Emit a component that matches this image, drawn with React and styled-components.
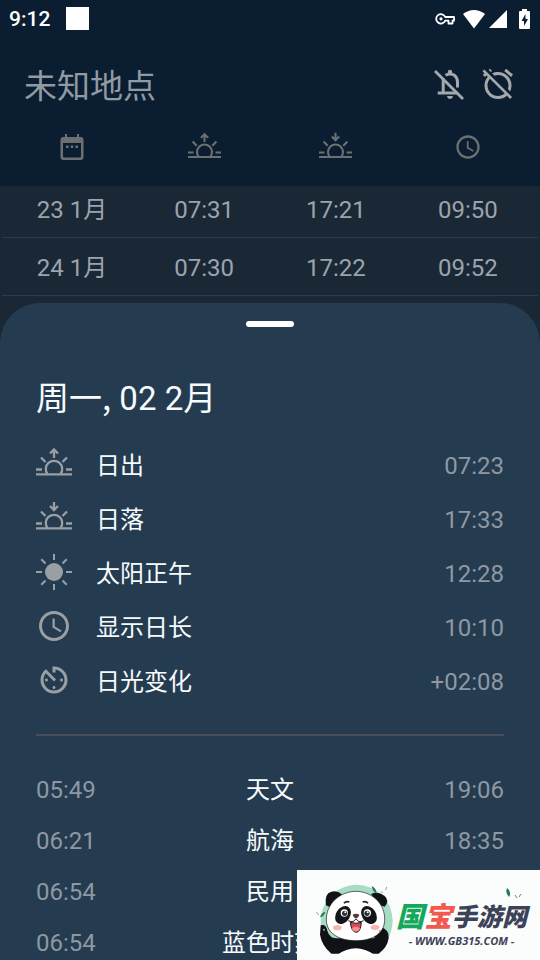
import React from "react";
import styled, { createGlobalStyle } from "styled-components";
import { MdAlarmOff, MdAvTimer, MdSchedule } from "react-icons/md";

const GlobalStyle = createGlobalStyle`
  * { box-sizing: border-box; }
  body {
    margin: 0;
    background: #253b50;
    font-family: Roboto, "Noto Sans CJK SC", sans-serif;
  }
`;

const Screen = styled.div`
  position: relative;
  display: flex;
  flex-direction: column;
  height: 100vh;
  overflow: hidden;
  background: #1a2836;
`;

const TopArea = styled.header`
  background: #0b1e31;
`;

const StatusBar = styled.div`
  display: flex;
  align-items: center;
  justify-content: space-between;
  height: 37px;
  padding: 0 10px 0 9px;
  color: #fff;
`;

const StatusGroup = styled.div`
  display: flex;
  align-items: center;
  gap: ${(p) => p.$gap}px;
`;

const StatusTime = styled.span`
  font-size: 21px;
  font-weight: 500;
`;

const StatusBlock = styled.span`
  width: 23px;
  height: 23px;
  background: #fff;
`;

const TitleBar = styled.div`
  display: flex;
  align-items: center;
  justify-content: space-between;
  height: 81px;
  padding: 13px 24px 0;
`;

const PlaceTitle = styled.h1`
  margin: 0;
  padding-top: 6px;
  color: #919aa3;
  font-size: 33px;
  font-weight: 400;
  line-height: 48px;
`;

const Actions = styled.div`
  display: flex;
  gap: 12px;
`;

const IconButton = styled.button`
  display: flex;
  padding: 0;
  border: 0;
  background: none;
  color: #a3a8ab;
`;

const DayTable = styled.table`
  width: 100%;
  padding: 0 2px;
  border-spacing: 0;
  table-layout: fixed;
  background: linear-gradient(#0b1e31 68px, #1a2836 68px);

  th:first-child, td:first-child { padding-left: 4px; }
  th:last-child, td:last-child { padding-right: 4px; }
`;

const DayColumn = styled.col`
  width: ${(p) => (p.$outer ? "25.4%" : "24.6%")};
`;

const HeadCell = styled.th`
  height: 68px;
  padding: 0 0 10px;
  color: #6c7072;
  line-height: 0;
  vertical-align: middle;
`;

const DayCell = styled.td`
  height: ${(p) => (p.$clipped ? 52 : 58)}px;
  padding: ${(p) => (p.$clipped ? "0 0 4px" : "2px 0 0")};
  border-bottom: 1px solid #2c3c49;
  color: #9ba4ad;
  font-size: 24px;
  line-height: 36px;
  text-align: center;
`;

const Sheet = styled.main`
  flex: 1 0 auto;
  display: flex;
  flex-direction: column;
  margin-top: 7px;
  padding: 18px 36px 0;
  border-radius: 40px 40px 0 0;
  background: #253b50;
`;

const Handle = styled.button`
  align-self: center;
  width: 48px;
  height: 6px;
  padding: 0;
  border: 0;
  border-radius: 3px;
  background: #fff;
`;

const DateTitle = styled.h2`
  margin: 45px 0 14px;
  color: #f6fbfd;
  font-size: 33px;
  font-weight: 400;
  line-height: 48px;
`;

const Weekday = styled.span`
  font-family: "Noto Sans CJK SC", sans-serif;
`;

const Facts = styled.dl`
  margin: 0;
`;

const FactRow = styled.div`
  display: grid;
  grid-template-columns: 36px 1fr auto;
  column-gap: 24px;
  align-items: center;
  height: 54px;
`;

const FactIcon = styled.span`
  display: flex;
  color: #9a9fa3;
`;

const FactLabel = styled.dt`
  padding-top: 3px;
  color: #f6fbfd;
  font-size: 24px;
  line-height: 36px;
`;

const FactValue = styled.dd`
  margin: 0;
  padding-top: 4px;
  color: #8d98a3;
  font-size: 24px;
  line-height: 36px;
`;

const Divider = styled.hr`
  width: 100%;
  height: 2px;
  margin: 27px 0 28px;
  border: 0;
  background: #4b4e59;
`;

const TwilightTable = styled.table`
  width: 100%;
  border-spacing: 0;
  table-layout: fixed;
`;

const TimeCell = styled.td`
  height: 51px;
  padding: 0;
  color: #8d98a3;
  font-size: 24px;
  text-align: ${(p) => p.$align};
`;

const NameCell = styled.th`
  height: 51px;
  padding: 0;
  color: #f6fbfd;
  font-size: 24px;
  font-weight: 400;
  line-height: 36px;
  text-align: center;
`;

const SiteBadge = styled.aside`
  position: absolute;
  right: 0;
  bottom: 0;
  display: flex;
  align-items: center;
  gap: 2px;
  width: 243px;
  height: 90px;
  padding: 8px 0 0 19px;
  background: #fbfcfc;
`;

const Brand = styled.div`
  position: relative;
  display: flex;
  flex-direction: column;
  align-items: center;
  padding-top: 10px;
`;

const BrandName = styled.div`
  display: flex;
  align-items: flex-end;
  font-family: "Noto Sans CJK SC", sans-serif;
  font-weight: 900;
  font-style: italic;
  line-height: 34px;
`;

const BrandPart = styled.span`
  color: ${(p) => p.$color};
  font-size: ${(p) => p.$size}px;
`;

const BrandUrl = styled.div`
  color: #3c4258;
  font-family: "Open Sans", sans-serif;
  font-size: 11px;
  font-weight: 700;
  font-style: italic;
  line-height: 18px;
  white-space: nowrap;
`;

const LeafMark = styled.svg`
  position: absolute;
  top: 0;
  right: 4px;
`;

function KeyIcon() {
  return (
    <svg width="20" height="20" viewBox="0 0 20 20" fill="none" stroke="currentColor" strokeWidth="1.8" strokeLinejoin="round" aria-hidden="true">
      <path d="M10.200 8H19V11.700H17.500V14.500H13.500V11.700H10.200A4.700 4.700 0 1 1 10.200 8Z" />
      <circle cx="6" cy="9.800" r="1.600" fill="currentColor" stroke="none" />
    </svg>
  );
}

function BellOff() {
  return (
    <svg width="36" height="36" viewBox="0 0 36 36" fill="none" stroke="currentColor" strokeWidth="3" aria-hidden="true">
      <path d="M11.2 12.500V27M5.700 27H25.500" />
      <path d="M13.500 9.300Q18 6.500 22.500 9.300Q25.500 11.700 25.500 16V21.500" />
      <path d="M15.800 7.500V6A2.200 2.200 0 0 1 20.200 6V7.500ZM15 30H21Q20.500 33 18 33Q15.500 33 15 30Z" fill="currentColor" stroke="none" />
      <path d="M3 5L31 33" strokeWidth="2.800" />
    </svg>
  );
}

function HorizonSun({ size, down }) {
  return (
    <svg width={size} height={size} viewBox="0 0 36 36" fill="none" stroke="currentColor" strokeWidth="2.3" aria-hidden="true">
      <path d="M0 28.3H36M0 23.5H6M30 23.5H36M5 11.5L9.500 16M31 11.5L26.500 16" />
      <path d="M11.500 28A8.200 8.200 0 1 1 24.500 28" />
      <path d={down ? "M18 2V10M14 6L18 10L22 6" : "M18 12V4M14 7.5L18 3.5L22 7.5"} />
    </svg>
  );
}

function NoonSun() {
  return (
    <svg width="36" height="36" viewBox="0 0 36 36" aria-hidden="true">
      <circle cx="18" cy="18" r="9" fill="currentColor" />
      <path
        d="M18 0V6M18 30V36M0 18H6M30 18H36M5.3 5.3L9.5 9.5M26.5 26.5L30.7 30.7M5.3 30.7L9.5 26.5M26.5 9.5L30.7 5.3"
        stroke="currentColor"
        strokeWidth="2"
      />
    </svg>
  );
}

function CalendarIcon() {
  return (
    <svg width="24" height="26" viewBox="0 0 24 26" fill="currentColor" aria-hidden="true">
      <path
        fillRule="evenodd"
        d="M5 0H7V3H17V0H19V3H20.500Q23.500 3 23.500 6V23Q23.500 26 20.500 26H3.500Q.500 26 .500 23V6Q.500 3 3.500 3H5ZM3 9V22.500Q3 23.500 4 23.500H20Q21 23.500 21 22.500V9Z"
      />
      <path d="M6 11.500H8.500V14H6ZM10.800 11.500H13.200V14H10.800ZM15.500 11.500H18V14H15.500Z" />
    </svg>
  );
}

function WifiIcon() {
  return (
    <svg width="22" height="20" viewBox="0 0 22 20" fill="currentColor" aria-hidden="true">
      <path d="M11 19.500L0 5Q11-3 22 5Z" />
    </svg>
  );
}

function SignalIcon() {
  return (
    <svg width="18" height="18" viewBox="0 0 18 18" fill="currentColor" aria-hidden="true">
      <path d="M18 0V18H0Z" />
    </svg>
  );
}

function BatteryIcon() {
  return (
    <svg width="11" height="20" viewBox="0 0 11 20" aria-hidden="true">
      <path d="M3 0H8V2H10Q11 2 11 3V19Q11 20 10 20H1Q0 20 0 19V3Q0 2 1 2H3Z" fill="#fff" />
      <path d="M6.500 5L2.500 12H5V17L9 10H6.500Z" fill="#0b1e31" />
    </svg>
  );
}

function Panda() {
  return (
    <svg width="78" height="72" viewBox="48 38 234 216" aria-hidden="true">
      <path d="M92 226A108 108 0 1 1 248 226Z" fill="#a9dcc4" />
      <path d="M78 105Q72 70 94 64Q110 59 126 72L94 112Z" fill="#111216" />
      <path d="M213 71Q235 62 253 76Q270 90 254 109L238 104Z" fill="#111216" />
      <path d="M62 165Q78 160 82 181Q88 204 112 204H218Q228 204 222 190Q218 169 240 170Q269 177 266 204Q262 232 236 250H94Q65 225 60 193Z" fill="#111216" />
      <path d="M111 254Q167 214 224 254Z" fill="#fff" />
      <path d="M168 63C213 63 256 98 254 150C252 193 214 211 168 211C120 211 80 191 79 149C78 99 122 63 168 63Z" fill="#fff" stroke="#17181c" strokeWidth="2" />
      <ellipse cx="129" cy="134" rx="21" ry="29" transform="rotate(34 129 134)" fill="#141519" />
      <ellipse cx="207" cy="134" rx="21" ry="29" transform="rotate(-34 207 134)" fill="#141519" />
      <circle cx="133" cy="128" r="11" fill="#fff" />
      <circle cx="202" cy="128" r="11" fill="#fff" />
      <circle cx="134" cy="129" r="8" fill="#292e32" />
      <circle cx="201" cy="129" r="8" fill="#292e32" />
      <circle cx="136" cy="126" r="3" fill="#fff" />
      <circle cx="203" cy="126" r="3" fill="#fff" />
      <path d="M132 99Q138 91 148 95M188 95Q198 91 204 99" fill="none" stroke="#222" strokeWidth="5" />
      <ellipse cx="112" cy="172" rx="13" ry="8" fill="#f6b8ae" />
      <ellipse cx="225" cy="171" rx="13" ry="8" fill="#f6b8ae" />
      <path d="M158 133Q168 128 178 133Q175 143 168 143Q161 143 158 133Z" fill="#58383d" />
      <path d="M145 151Q161 159 168 145Q175 159 191 151" fill="none" stroke="#222" strokeWidth="3" />
      <path d="M151 156Q168 162 184 156Q182 186 168 186Q154 184 151 156Z" fill="#d94b56" stroke="#24171a" strokeWidth="3" />
      <path d="M155 174Q168 165 180 174Q176 184 168 184Q159 183 155 174Z" fill="#f78e91" />
      <circle cx="72" cy="178" r="3" fill="#a3a3a3" />
      <circle cx="239" cy="181" r="3" fill="#a3a3a3" />
      <path d="M215 47Q229 54 230 70Q217 63 215 47ZM60 141Q63 127 76 124Q73 138 60 141Z" fill="#247b55" />
      <path d="M242 63L249 68M257 59L260 50M49 125L56 134" stroke="#5b7669" strokeWidth="2" />
    </svg>
  );
}

const days = [
  ["23 1月", "07:31", "17:21", "09:50"],
  ["24 1月", "07:30", "17:22", "09:52"],
];

const facts = [
  { label: "日出", value: "07:23", icon: <HorizonSun size={36} /> },
  { label: "日落", value: "17:33", icon: <HorizonSun size={36} down /> },
  { label: "太阳正午", value: "12:28", icon: <NoonSun /> },
  { label: "显示日长", value: "10:10", icon: <MdSchedule size={36} /> },
  { label: "日光变化", value: "+02:08", icon: <MdAvTimer size={36} /> },
];

const twilights = [
  ["05:49", "天文", "19:06"],
  ["06:21", "航海", "18:35"],
  ["06:54", "民用", ""],
  ["06:54", "蓝色时刻", ""],
];

export default function App() {
  return (
    <Screen>
      <GlobalStyle />
      <TopArea>
        <StatusBar>
          <StatusGroup $gap={16}>
            <StatusTime>9:12</StatusTime>
            <StatusBlock />
          </StatusGroup>
          <StatusGroup $gap={8}>
            <KeyIcon />
            <StatusGroup $gap={12}>
              <StatusGroup $gap={4}>
                <WifiIcon />
                <SignalIcon />
              </StatusGroup>
              <BatteryIcon />
            </StatusGroup>
          </StatusGroup>
        </StatusBar>
        <TitleBar>
          <PlaceTitle>未知地点</PlaceTitle>
          <Actions>
            <IconButton type="button" aria-label="通知已关闭">
              <BellOff />
            </IconButton>
            <IconButton type="button" aria-label="闹钟已关闭">
              <MdAlarmOff size={36} />
            </IconButton>
          </Actions>
        </TitleBar>
      </TopArea>

      <DayTable>
        <colgroup>
          <DayColumn $outer />
          <DayColumn />
          <DayColumn />
          <DayColumn $outer />
        </colgroup>
        <thead>
          <tr>
            <HeadCell scope="col" aria-label="日期"><CalendarIcon /></HeadCell>
            <HeadCell scope="col" aria-label="日出"><HorizonSun size={33} /></HeadCell>
            <HeadCell scope="col" aria-label="日落"><HorizonSun size={33} down /></HeadCell>
            <HeadCell scope="col" aria-label="日长"><MdSchedule size={28} /></HeadCell>
          </tr>
        </thead>
        <tbody>
          {days.map((day, row) => (
            <tr key={day[0]}>
              {day.map((text) => (
                <DayCell key={text} $clipped={row === 0}>{text}</DayCell>
              ))}
            </tr>
          ))}
        </tbody>
      </DayTable>

      <Sheet>
        <Handle type="button" aria-label="收起" />
        <DateTitle><Weekday>周一,</Weekday> 02 2月</DateTitle>
        <Facts>
          {facts.map((fact) => (
            <FactRow key={fact.label}>
              <FactIcon>{fact.icon}</FactIcon>
              <FactLabel>{fact.label}</FactLabel>
              <FactValue>{fact.value}</FactValue>
            </FactRow>
          ))}
        </Facts>
        <Divider />
        <TwilightTable>
          <tbody>
            {twilights.map(([start, name, end]) => (
              <tr key={name}>
                <TimeCell $align="left">{start}</TimeCell>
                <NameCell scope="row">{name}</NameCell>
                <TimeCell $align="right">{end}</TimeCell>
              </tr>
            ))}
          </tbody>
        </TwilightTable>
      </Sheet>

      <SiteBadge>
        <Panda />
        <Brand>
          <BrandName>
            <BrandPart $color="#13a85b" $size={28}>国</BrandPart>
            <BrandPart $color="#f25a50" $size={28}>宝</BrandPart>
            <BrandPart $color="#3c4258" $size={25}>手游网</BrandPart>
          </BrandName>
          <BrandUrl>- WWW.GB315.COM -</BrandUrl>
          <LeafMark width="18" height="12" viewBox="0 0 18 12" aria-hidden="true">
            <path d="M2 0Q7 4 4 9Q0 5 2 0Z" fill="#2b7657" />
            <path d="M10 7L12 10M14 9L16 6" stroke="#6d7f78" />
          </LeafMark>
        </Brand>
      </SiteBadge>
    </Screen>
  );
}
